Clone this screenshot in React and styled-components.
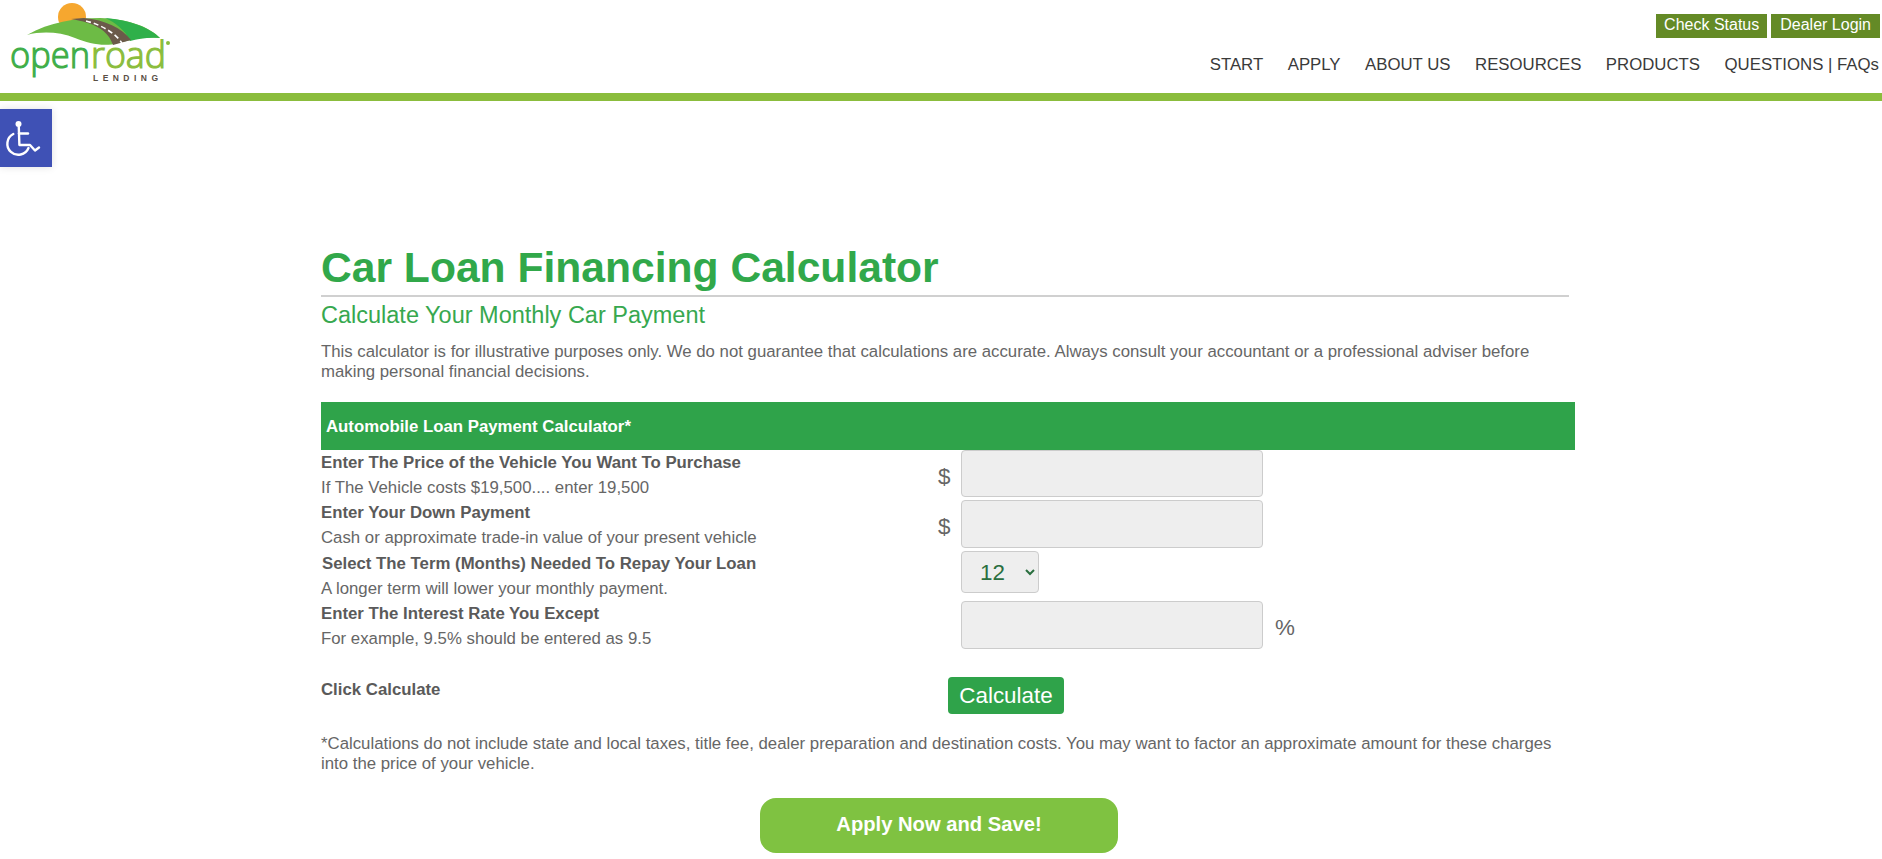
import React from "react";
import styled, { createGlobalStyle } from "styled-components";

const Global = createGlobalStyle`
  html, body { margin: 0; padding: 0; background: #fff; }
  body { font-family: "Liberation Sans", Arial, sans-serif; color: #666; overflow: hidden; }
`;
const Page = styled.div`width: 1882px; height: 859px; position: relative; overflow: hidden;`;
const Header = styled.header`
  height: 93px; border-bottom: 8px solid #8bbd3d; display: flex; justify-content: space-between;
`;
const LogoWrap = styled.a`display: block; width: 175px; height: 84px;`;
const HeaderRight = styled.div`display: flex; flex-direction: column; align-items: flex-end; padding: 14px 2px 0 0;`;
const TopButtons = styled.div`display: flex; gap: 4px;`;
const TopButton = styled.a`
  background: #648a26; color: #fff; font-size: 16px; height: 24px; line-height: 22px;
  padding: 0 ${p => p.$pad}px; display: block;
`;
const Nav = styled.nav`display: flex; gap: 24.5px; margin-top: 16px; padding-right: 1px;`;
const NavItem = styled.a`color: #3a3a3a; font-size: 16.8px; line-height: 22px; white-space: nowrap;`;
const A11y = styled.button`
  position: absolute; left: 0; top: 109px; width: 52px; height: 58px; border: 0; padding: 0;
  background: #3f51b5; box-shadow: 0 0 8px rgba(0,0,0,.12); display: block;
`;
const Main = styled.main`margin-left: 321px; width: 1254px; padding-top: 140px;`;
const Title = styled.h1`
  margin: 0; color: #31a84a; font-size: 42.6px; line-height: 52px; font-weight: 700; width: 1248px;
  border-bottom: 2px solid #d0d0d0; padding-bottom: 2px;
`;
const Sub = styled.h2`margin: 4px 0 0; color: #37a84f; font-size: 23.5px; line-height: 28px; font-weight: 400;`;
const Para = styled.p`margin: ${p => p.$mt}px 0 0; font-size: 16.8px; line-height: 20.4px; width: 1248px; color: #666;`;
const Band = styled.div`
  margin-top: 19.2px; height: 48px; background: #2fa34a; color: #fff; font-weight: 700; font-size: 16.8px;
  line-height: 49px; padding-left: 5px;
`;
const Row = styled.div`
  display: grid; grid-template-columns: 617px 23px 302px auto; height: ${p => p.$h}px;
`;
const LabelCell = styled.div`font-size: 16.8px; line-height: 25px;`;
const Strong = styled.div`font-weight: 700; color: #5a5a5a; padding-left: ${p => p.$in || 0}px;`;
const Unit = styled.div`font-size: 22.4px; line-height: ${p => p.$lh}px; color: #666; padding-left: ${p => p.$pl || 0}px;`;
const Field = styled.input`
  box-sizing: border-box; width: 302px; height: ${p => p.$h}px; background: #eee; border: 1px solid #ccc;
  border-radius: 4px; padding: 0; margin: 0;
`;
const Pick = styled.select`
  box-sizing: border-box; width: 78px; height: 42px; background: #eee; border: 1px solid #ccc; border-radius: 4px;
  color: #2a6f3f; font-size: 22.4px; padding: 0 0 0 14px; margin: 0; font-family: "Liberation Sans", Arial, sans-serif;
`;
const CalcRow = styled.div`display: grid; grid-template-columns: 627px auto; margin-top: 26px; height: 37px;`;
const CalcLabel = styled.div`font-size: 16.8px; font-weight: 700; color: #5a5a5a; line-height: 25px;`;
const CalcButton = styled.button`
  width: 116px; height: 37px; background: #2fa34a; color: #fff; border: 0; border-radius: 4px;
  font-size: 22.4px; padding: 0; font-family: "Liberation Sans", Arial, sans-serif;
`;
const ApplyWrap = styled.div`display: flex; justify-content: center; width: 1236px; margin-top: 23.2px;`;
const Apply = styled.a`
  display: block; width: 358px; height: 55px; border-radius: 16px; background: #7fc241; color: #fff;
  font-weight: 700; font-size: 20.2px; line-height: 52px; text-align: center;
`;

const Logo = () => (
  <svg width="175" height="84" viewBox="0 0 175 84" aria-label="Open Road Lending">
    <circle cx="72" cy="17" r="14" fill="#f6a72f" />
    <path d="M27 35 C50 22 75 18 100 18 C128 19 150 27 160 38 C145 36 130 40 118 43 C105 47 90 44 75 38 C60 32 42 31 27 35 Z" fill="#6dbb45" />
    <path d="M105 18 C130 20 150 28 160 38 C148 37 138 39 130 41 C125 30 115 22 105 18 Z" fill="#2fb04a" />
    <path d="M71 19 C95 23 108 30 113 45 L131 40 C122 28 105 20 84 18 Z" fill="#6b5a4a" />
    <path d="M86 21 C102 25 115 33 122 43" fill="none" stroke="#fff" strokeWidth="1.6" strokeDasharray="5 3" />
    <text x="10" y="68" textLength="80" lengthAdjust="spacingAndGlyphs" fontFamily="Open Sans, sans-serif" fontSize="37" fontWeight="300" fill="#3fae49" stroke="#3fae49" strokeWidth="1.2">open</text>
    <text x="91" y="68" textLength="75" lengthAdjust="spacingAndGlyphs" fontFamily="Open Sans, sans-serif" fontSize="37" fontWeight="300" fill="#8bbd3d" stroke="#8bbd3d" strokeWidth="1.2">road</text>
    <text x="93" y="81" textLength="65" fontFamily="Liberation Sans, sans-serif" fontSize="8.5" fontWeight="700" fill="#5a4f45">LENDING</text>
    <circle cx="168" cy="43" r="2" fill="#8bbd3d" />
  </svg>
);

const Wheelchair = () => (
  <svg width="52" height="58" viewBox="0 0 52 58" fill="none" stroke="#fff" strokeWidth="2.4" strokeLinecap="round" strokeLinejoin="round">
    <circle cx="18.5" cy="15" r="3" fill="#fff" stroke="none" />
    <path d="M18.8 18 L19.4 36 H30 L35 41.5 L39 38.5" />
    <path d="M19 24.5 H28" />
    <path d="M13.3 25 A11 11 0 1 0 28.5 39" />
  </svg>
);

const rows = [
  { h: 50, ih: 47, t: "Enter The Price of the Vehicle You Want To Purchase", s: "If The Vehicle costs $19,500.... enter 19,500", u: "$", lh: 53 },
  { h: 51, ih: 48, t: "Enter Your Down Payment", s: "Cash or approximate trade-in value of your present vehicle", u: "$", lh: 53 },
];

export default function App() {
  return (
    <Page>
      <Global />
      <Header>
        <LogoWrap><Logo /></LogoWrap>
        <HeaderRight>
          <TopButtons>
            <TopButton $pad={8}>Check Status</TopButton>
            <TopButton $pad={9}>Dealer Login</TopButton>
          </TopButtons>
          <Nav>
            {["START", "APPLY", "ABOUT US", "RESOURCES", "PRODUCTS", "QUESTIONS | FAQs"].map(n => <NavItem key={n}>{n}</NavItem>)}
          </Nav>
        </HeaderRight>
      </Header>
      <A11y aria-label="Accessibility"><Wheelchair /></A11y>
      <Main>
        <Title>Car Loan Financing Calculator</Title>
        <Sub>Calculate Your Monthly Car Payment</Sub>
        <Para $mt={13}>This calculator is for illustrative purposes only. We do not guarantee that calculations are accurate. Always consult your accountant or a professional adviser before making personal financial decisions.</Para>
        <Band>Automobile Loan Payment Calculator*</Band>
        {rows.map(r => (
          <Row key={r.t} $h={r.h}>
            <LabelCell><Strong>{r.t}</Strong>{r.s}</LabelCell>
            <Unit $lh={r.lh}>{r.u}</Unit>
            <Field $h={r.ih} />
          </Row>
        ))}
        <Row $h={50}>
          <LabelCell><Strong $in={1}>Select The Term (Months) Needed To Repay Your Loan</Strong>A longer term will lower your monthly payment.</LabelCell>
          <Unit $lh={50} />
          <Pick defaultValue="12"><option>12</option><option>24</option><option>36</option><option>48</option><option>60</option></Pick>
        </Row>
        <Row $h={50}>
          <LabelCell><Strong>Enter The Interest Rate You Except</Strong>For example, 9.5% should be entered as 9.5</LabelCell>
          <Unit $lh={50} />
          <Field $h={48} />
          <Unit $lh={53} $pl={12}>%</Unit>
        </Row>
        <CalcRow>
          <CalcLabel>Click Calculate</CalcLabel>
          <CalcButton>Calculate</CalcButton>
        </CalcRow>
        <Para $mt={20}>*Calculations do not include state and local taxes, title fee, dealer preparation and destination costs. You may want to factor an approximate amount for these charges into the price of your vehicle.</Para>
        <ApplyWrap><Apply>Apply Now and Save!</Apply></ApplyWrap>
      </Main>
    </Page>
  );
}
